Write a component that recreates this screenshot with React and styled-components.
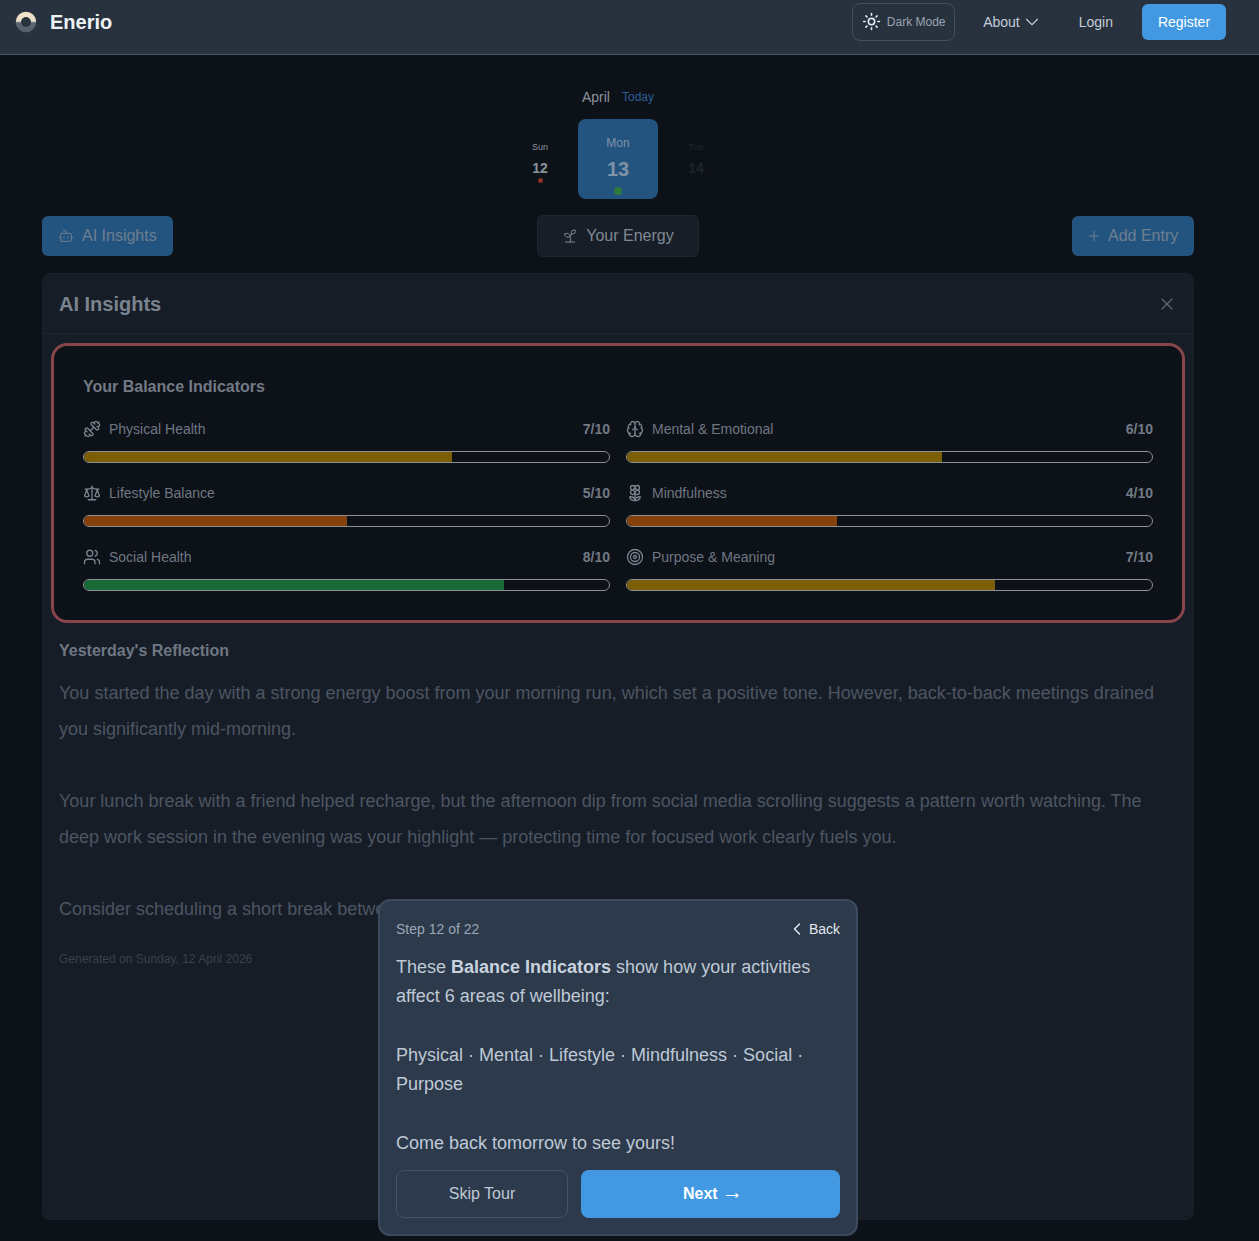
import React from "react";
import styled, { createGlobalStyle } from "styled-components";
import { Sun, ChevronDown, ChevronLeft, Bot, Sprout, Plus, X, Dumbbell, Brain, Scale, Flower2, Users, Target } from "lucide-react";

const Global = createGlobalStyle`
  html, body { margin: 0; padding: 0; background: #0d1218; }
  body { font-family: "Liberation Sans", Arial, sans-serif; }
  * { box-sizing: border-box; }
`;

const Page = styled.div`
  position: relative;
  min-height: 1241px;
  background: #0d1218;
`;
const Header = styled.header`
  height: 55px;
  background: #28323e;
  border-bottom: 1px solid #4a5563;
  display: flex;
  align-items: center;
  padding: 0 33px 11px 15px;
`;
const Brand = styled.div`
  display: flex;
  align-items: center;
  gap: 13px;
  padding-top: 1px;
  font-size: 20px;
  font-weight: 700;
  color: #edf2f7;
  flex: 1;
`;
const Nav = styled.nav`
  display: flex;
  align-items: center;
`;
const ThemeToggle = styled.button`
  width: 103px;
  height: 38px;
  margin-right: 28px;
  display: flex;
  align-items: center;
  justify-content: center;
  gap: 6px;
  background: transparent;
  border: 1px solid #434e5c;
  border-radius: 8px;
  color: #98a3b3;
  font: 12px "Liberation Sans", Arial, sans-serif;
  padding: 0;
`;
const NavLink = styled.span`
  display: flex;
  align-items: center;
  gap: 1px;
  font-size: 14px;
  color: #c3cdd9;
  margin-right: ${p => p.$mr}px;
`;
const Register = styled.button`
  width: 84px;
  height: 36px;
  border: 0;
  border-radius: 6px;
  background: #4299e1;
  color: #fff;
  font: 14px "Liberation Sans", Arial, sans-serif;
`;
const Main = styled.main`
  padding: 0 65px 0 42px;
`;
const MonthRow = styled.div`
  display: flex;
  justify-content: center;
  align-items: center;
  gap: 12px;
  padding-top: 19px;
  height: 64px;
`;
const Month = styled.span`
  font-size: 14px;
  color: #8a929e;
`;
const Today = styled.span`
  font-size: 12px;
  color: #2b5c96;
`;
const DayRow = styled.div`
  display: flex;
  justify-content: center;
  align-items: flex-start;
  height: 96px;
`;
const Day = styled.div`
  width: 76px;
  height: 80px;
  display: flex;
  flex-direction: column;
  align-items: center;
  padding-top: 21px;
  color: ${p => p.$faded ? "#1f252d" : "#8b929c"};
`;
const ActiveDay = styled.div`
  position: relative;
  width: 80px;
  height: 80px;
  background: #235480;
  border-radius: 8px;
  display: flex;
  flex-direction: column;
  align-items: center;
  padding-top: 17px;
  color: #7e92a6;
`;
const DayName = styled.span`
  font-size: ${p => p.$big ? 12 : 9}px;
  line-height: 14px;
`;
const DayNum = styled.span`
  font-size: ${p => p.$big ? 20 : 14}px;
  line-height: ${p => p.$big ? 24 : 16}px;
  font-weight: 700;
  margin-top: ${p => p.$big ? 7 : 6}px;
`;
const Dot = styled.span`
  width: 5px;
  height: 5px;
  border-radius: 50%;
  background: ${p => p.$c};
  margin-top: 2px;
`;
const ActiveDot = styled.span`
  position: absolute;
  left: 36px;
  bottom: 4px;
  width: 8px;
  height: 8px;
  border-radius: 50%;
  background: #2f7a3e;
`;
const Actions = styled.div`
  display: grid;
  grid-template-columns: 1fr auto 1fr;
  align-items: center;
  height: 42px;
`;
const BlueBtn = styled.button`
  height: 40px;
  width: ${p => p.$w}px;
  justify-self: ${p => p.$end ? "end" : "start"};
  display: flex;
  align-items: center;
  gap: ${p => p.$gap}px;
  background: #235480;
  border: 0;
  border-radius: 6px;
  color: #6e7f90;
  font: 16px "Liberation Sans", Arial, sans-serif;
  padding: 0 0 0 ${p => p.$pl}px;
`;
const EnergyBtn = styled.button`
  height: 42px;
  width: 162px;
  display: flex;
  align-items: center;
  justify-content: center;
  gap: 8px;
  background: #171e27;
  border: 1px solid #1f2731;
  border-radius: 6px;
  color: #808894;
  font: 16px "Liberation Sans", Arial, sans-serif;
  padding: 0;
`;
const Panel = styled.section`
  margin-top: 16px;
  height: 947px;
  background: #161d27;
  border: 1px solid #1a212b;
  border-radius: 8px;
  padding-bottom: 16px;
`;
const PanelHead = styled.div`
  height: 60px;
  display: flex;
  align-items: center;
  justify-content: space-between;
  padding: 0 16px;
  border-bottom: 1px solid #1f2732;
  color: #5f6670;
`;
const PanelTitle = styled.h2`
  margin: 1px 0 0;
  font-size: 20px;
  font-weight: 700;
  color: #7b838f;
`;
const Balance = styled.div`
  margin: 9px 8px 0;
  height: 280px;
  background: #0d1118;
  border: 3px solid #8a454b;
  border-radius: 16px;
  padding: 31px 29px 0;
`;
const BalanceTitle = styled.h3`
  margin: 0 0 21px;
  font-size: 16px;
  line-height: 20px;
  font-weight: 700;
  color: #727a85;
`;
const Grid = styled.div`
  display: grid;
  grid-template-columns: 1fr 1fr;
  column-gap: 16px;
  row-gap: 19px;
`;
const Indicator = styled.div`
  display: flex;
  flex-direction: column;
  gap: 12px;
`;
const IndicatorTop = styled.div`
  height: 21px;
  display: flex;
  align-items: center;
  gap: 8px;
  font-size: 14px;
  color: #6f7783;
`;
const Score = styled.span`
  margin-left: auto;
  font-size: 14px;
  font-weight: 700;
  color: #727a85;
`;
const Track = styled.div`
  height: 12px;
  border: 1px solid #8d9094;
  border-radius: 6px;
  overflow: hidden;
  background: #0d1118;
`;
const Fill = styled.div`
  height: 100%;
  background: ${p => p.$c};
`;
const Reflection = styled.div`
  padding: 16px 16px 0;
`;
const ReflectionTitle = styled.h3`
  margin: 0 0 12px;
  font-size: 16px;
  line-height: 24px;
  font-weight: 700;
  color: #6f7783;
`;
const ReflectionText = styled.p`
  margin: 0;
  font-size: 18px;
  line-height: 36px;
  color: #4d5562;
  white-space: pre-line;
`;
const Generated = styled.p`
  margin: 24px 0 0;
  font-size: 12px;
  line-height: 16px;
  color: #39414d;
`;
const Tour = styled.div`
  position: absolute;
  left: 378px;
  top: 899px;
  width: 480px;
  height: 337px;
  background: #2d3a4b;
  border: 2px solid #3c4a5e;
  border-radius: 12px;
  padding: 16px;
`;
const TourTop = styled.div`
  display: flex;
  justify-content: space-between;
  align-items: center;
  height: 24px;
  margin-bottom: 12px;
`;
const Step = styled.span`
  font-size: 14px;
  color: #9aa7b8;
`;
const Back = styled.span`
  display: flex;
  align-items: center;
  gap: 2px;
  font-size: 14px;
  color: #e2e8f0;
`;
const TourText = styled.p`
  margin: 0;
  font-size: 18px;
  line-height: 29.25px;
  color: #bfc9d6;
  white-space: pre-line;
  strong { color: #c8d2de; font-weight: 700; }
`;
const TourActions = styled.div`
  display: flex;
  gap: 13px;
  margin-top: 12px;
`;
const Skip = styled.button`
  width: 172px;
  height: 48px;
  background: transparent;
  border: 1px solid #465366;
  border-radius: 8px;
  color: #bfc9d6;
  font: 16px "Liberation Sans", Arial, sans-serif;
`;
const Next = styled.button`
  flex: 1;
  height: 48px;
  background: #4299e1;
  border: 0;
  border-radius: 8px;
  color: #fff;
  font: 700 16px "Liberation Sans", Arial, sans-serif;
`;
const Arrow = styled.span`
  font: 400 21px/16px "Liberation Serif", serif;
  margin-right: -5px;
`;

const Logo = () => (
  <svg width="22" height="22" viewBox="0 0 22 22">
    <defs>
      <linearGradient id="lg" x1="0" y1="0" x2="0" y2="1">
        <stop offset="0" stopColor="#f3e3c9" />
        <stop offset="0.45" stopColor="#e6dccb" />
        <stop offset="0.55" stopColor="#5d6672" />
        <stop offset="1" stopColor="#56606c" />
      </linearGradient>
    </defs>
    <circle cx="11" cy="11" r="7.5" fill="none" stroke="url(#lg)" strokeWidth="5.5" />
    <circle cx="11" cy="11" r="4.8" fill="#2a323c" />
  </svg>
);

const indicatorIcon = { size: 18, strokeWidth: 1.75, color: "#7b838f" };
const indicators = [
  { I: Dumbbell, name: "Physical Health", v: 7, w: 70, c: "#7a5f08" },
  { I: Brain, name: "Mental & Emotional", v: 6, w: 60, c: "#7a5f08" },
  { I: Scale, name: "Lifestyle Balance", v: 5, w: 50, c: "#86400c" },
  { I: Flower2, name: "Mindfulness", v: 4, w: 40, c: "#86400c" },
  { I: Users, name: "Social Health", v: 8, w: 80, c: "#1a6a36" },
  { I: Target, name: "Purpose & Meaning", v: 7, w: 70, c: "#7a5f08" },
];

export default function App() {
  return (
    <Page>
      <Global />
      <Header>
        <Brand><Logo />Enerio</Brand>
        <Nav>
          <ThemeToggle><Sun size={19} color="#e2e8f0" />Dark Mode</ThemeToggle>
          <NavLink $mr={36}>About <ChevronDown size={22} strokeWidth={1.25} /></NavLink>
          <NavLink $mr={29}>Login</NavLink>
          <Register>Register</Register>
        </Nav>
      </Header>
      <Main>
        <MonthRow><Month>April</Month><Today>Today</Today></MonthRow>
        <DayRow>
          <Day><DayName>Sun</DayName><DayNum>12</DayNum><Dot $c="#8b3326" /></Day>
          <ActiveDay><DayName $big>Mon</DayName><DayNum $big>13</DayNum><ActiveDot /></ActiveDay>
          <Day $faded><DayName>Tue</DayName><DayNum>14</DayNum></Day>
        </DayRow>
        <Actions>
          <BlueBtn $w={131} $pl={16} $gap={8}><Bot size={16} strokeWidth={1.5} />AI Insights</BlueBtn>
          <EnergyBtn><Sprout size={16} strokeWidth={1.5} />Your Energy</EnergyBtn>
          <BlueBtn $w={122} $pl={14} $gap={6} $end><Plus size={16} strokeWidth={1.5} />Add Entry</BlueBtn>
        </Actions>
        <Panel>
          <PanelHead>
            <PanelTitle>AI Insights</PanelTitle>
            <X size={20} strokeWidth={1.5} />
          </PanelHead>
          <Balance>
            <BalanceTitle>Your Balance Indicators</BalanceTitle>
            <Grid>
              {indicators.map(({ I, name, v, w, c }) => (
                <Indicator key={name}>
                  <IndicatorTop><I {...indicatorIcon} />{name}<Score>{v}/10</Score></IndicatorTop>
                  <Track><Fill $c={c} style={{ width: `${w}%` }} /></Track>
                </Indicator>
              ))}
            </Grid>
          </Balance>
          <Reflection>
            <ReflectionTitle>Yesterday's Reflection</ReflectionTitle>
            <ReflectionText>{`You started the day with a strong energy boost from your morning run, which set a positive tone. However, back-to-back meetings drained you significantly mid-morning.

Your lunch break with a friend helped recharge, but the afternoon dip from social media scrolling suggests a pattern worth watching. The deep work session in the evening was your highlight — protecting time for focused work clearly fuels you.

Consider scheduling a short break between meetings and replacing afternoon scrolling.`}</ReflectionText>
            <Generated>Generated on Sunday, 12 April 2026</Generated>
          </Reflection>
        </Panel>
      </Main>
      <Tour>
        <TourTop><Step>Step 12 of 22</Step><Back><ChevronLeft size={20} strokeWidth={1.75} />Back</Back></TourTop>
        <TourText>These <strong>Balance Indicators</strong> show how your activities affect 6 areas of wellbeing:{"\n\n"}Physical · Mental · Lifestyle · Mindfulness · Social · Purpose{"\n\n"}Come back tomorrow to see yours!</TourText>
        <TourActions><Skip>Skip Tour</Skip><Next>Next <Arrow>→</Arrow></Next></TourActions>
      </Tour>
    </Page>
  );
}
